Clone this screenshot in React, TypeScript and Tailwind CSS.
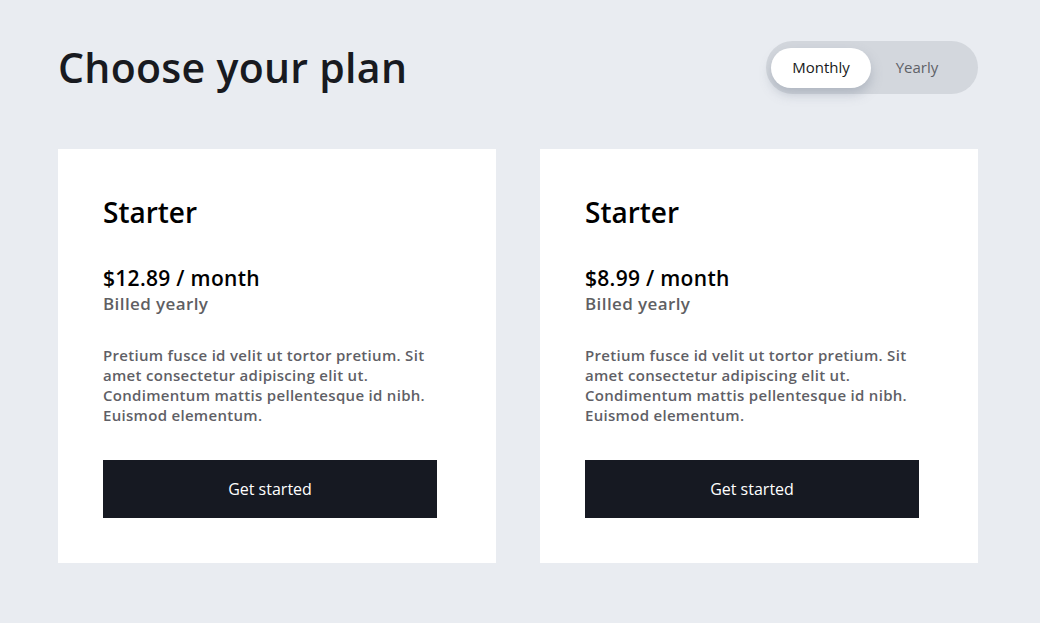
import { useState } from 'react';

const plans = [
  { name: 'Starter', price: '$12.89 / month' },
  { name: 'Starter', price: '$8.99 / month' },
];

const blurb =
  'Pretium fusce id velit ut tortor pretium. Sit amet consectetur adipiscing elit ut. Condimentum mattis pellentesque id nibh. Euismod elementum.';

const PlanCard = ({ name, price }: { name: string; price: string }) => (
  <div className="bg-white pl-[45px] pr-[59px] pt-[45px] pb-[45px]">
    <h2 className="text-[28px] leading-[36px] font-semibold text-black">{name}</h2>
    <p className="mt-[34px] text-[21px] leading-[28px] font-semibold tracking-[0.3px] text-black">{price}</p>
    <p className="text-[17px] leading-[24px] font-semibold tracking-[0.4px] text-[#5f5f63]">Billed yearly</p>
    <p className="mt-[29px] text-[15px] leading-[20px] font-semibold tracking-[0.3px] text-[#5f5f66]">{blurb}</p>
    <button className="mt-[35px] h-[58px] w-full bg-[#161922] text-[16px] font-medium text-white">
      Get started
    </button>
  </div>
);

export default function App() {
  const [period, setPeriod] = useState<'monthly' | 'yearly'>('monthly');

  return (
    <div className="min-h-screen bg-[#e9ecf1] pt-[41px] pb-[60px] font-['Open_Sans',sans-serif] text-[#181a20]">
      <div className="ml-[58px] w-[920px]">
        <header className="flex h-[53px] items-center justify-between">
          <h1 className="text-[41px] leading-[53px] font-semibold tracking-[0.3px]">Choose your plan</h1>
          <div className="flex h-[53px] w-[212px] items-center rounded-full bg-[#d3d7dd] px-[5px]">
            <button
              onClick={() => setPeriod('monthly')}
              className={`h-[40px] w-[100px] rounded-full text-[15px] ${
                period === 'monthly' ? 'bg-white text-[#181a20] shadow-[0_6px_12px_rgba(110,120,140,0.35)]' : 'text-[#5f6268]'
              }`}
            >
              Monthly
            </button>
            <button
              onClick={() => setPeriod('yearly')}
              className={`h-[40px] w-[92px] rounded-full text-[15px] ${
                period === 'yearly' ? 'bg-white text-[#181a20] shadow-[0_6px_12px_rgba(110,120,140,0.35)]' : 'text-[#5f6268]'
              }`}
            >
              Yearly
            </button>
          </div>
        </header>
        <div className="mt-[55px] grid grid-cols-2 gap-[44px]">
          {plans.map((p) => (
            <PlanCard key={p.price} name={p.name} price={p.price} />
          ))}
        </div>
      </div>
    </div>
  );
}
